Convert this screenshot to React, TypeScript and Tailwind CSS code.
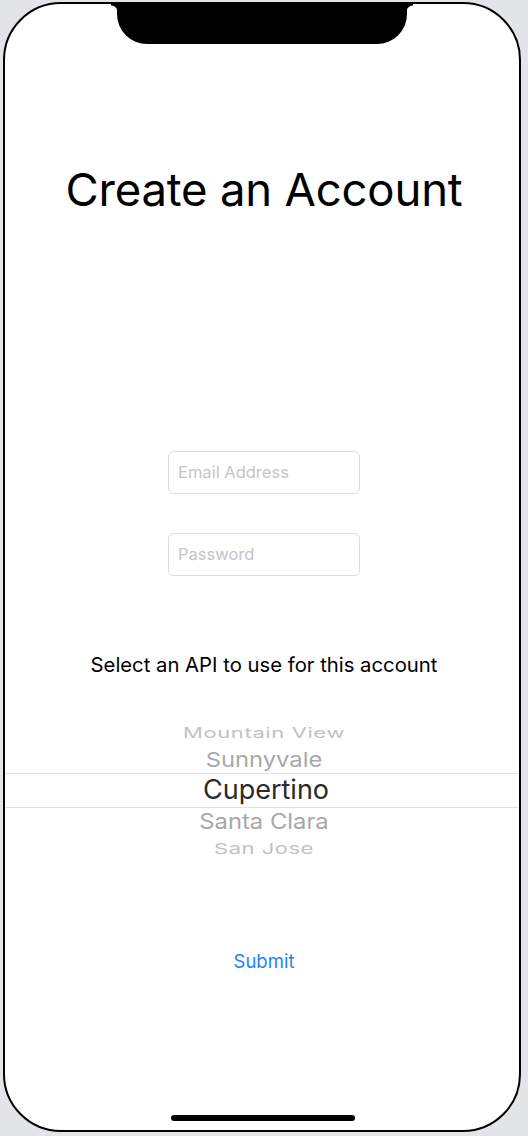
import React from "react";

const font = { fontFamily: "Inter, 'Noto Sans', sans-serif" };

export default function App() {
  return (
    <div className="w-[528px] h-[1136px] bg-[#e3e4e8] pt-[2px] pl-[3px]" style={font}>
      <div className="relative w-[518px] h-[1130px] border-2 border-black rounded-[58px] bg-white overflow-hidden flex flex-col items-center pl-[4px]">
        {/* notch */}
        <div className="absolute top-0 left-[112px] w-[290px] h-[40px] bg-black rounded-b-[30px]" />
        <div className="absolute top-0 left-[106px] w-[8px] h-[8px] bg-[radial-gradient(circle_at_0%_100%,transparent_6px,black_7px)]" />
        <div className="absolute top-0 left-[400px] w-[8px] h-[8px] bg-[radial-gradient(circle_at_100%_100%,transparent_6px,black_7px)]" />

        <div className="mt-[158px] h-[56px] flex items-center text-[45.5px] text-black tracking-[-0.2px]">
          Create an Account
        </div>

        <div className="mt-[233px] w-[192px] h-[43px] border border-[#dcdcdc] rounded-[6px] flex items-center pl-[9px] text-[16.5px] text-[#c4c4c8]">
          Email Address
        </div>
        <div className="mt-[39px] w-[192px] h-[43px] border border-[#dcdcdc] rounded-[6px] flex items-center pl-[9px] text-[16.5px] text-[#c4c4c8]">
          Password
        </div>

        <div className="mt-[75px] h-[28px] flex items-center text-[20.3px] text-black">
          Select an API to use for this account
        </div>

        <div className="mt-[40px] -ml-[4px] w-[calc(100%+4px)] flex flex-col items-center pl-[4px]">
          <div className="h-[28px] flex items-center text-[22px] text-[#c2c2c2] tracking-[0.6px] [transform:scaleY(0.66)]">
            Mountain View
          </div>
          <div className="h-[26px] flex items-center text-[23.8px] text-[#a8a8a8] [transform:scaleY(0.87)]">
            Sunnyvale
          </div>
          <div className="-ml-[4px] w-[calc(100%+4px)] h-[35px] border-y border-[#e0e0e0] flex items-center justify-center pl-[8px] text-[27px] text-[#2a2a2a]">
            Cupertino
          </div>
          <div className="h-[28px] flex items-center text-[23.8px] text-[#a8a8a8] [transform:scaleY(0.89)]">
            Santa Clara
          </div>
          <div className="h-[26px] flex items-center text-[22px] text-[#c2c2c2] tracking-[0.5px] [transform:scaleY(0.68)]">
            San Jose
          </div>
        </div>

        <div className="mt-[86px] h-[28px] flex items-center text-[18.5px] text-[#1a84ff]">
          Submit
        </div>

        {/* home indicator */}
        <div className="absolute bottom-[9px] left-[166px] w-[184px] h-[6px] rounded-full bg-black" />
      </div>
    </div>
  );
}
